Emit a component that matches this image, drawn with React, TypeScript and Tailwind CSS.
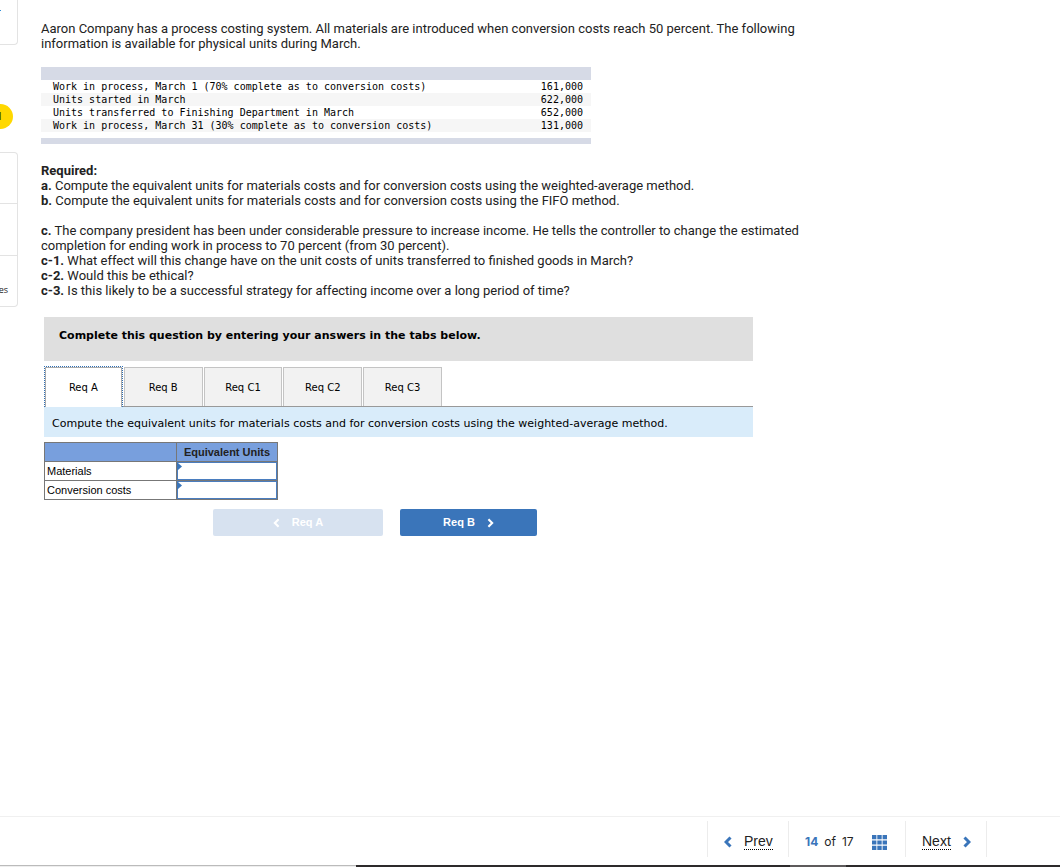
import { useState } from "react";

interface Tab {
  id: string;
  label: string;
}

const tabs: Tab[] = [
  { id: "a", label: "Req A" },
  { id: "b", label: "Req B" },
  { id: "c1", label: "Req C1" },
  { id: "c2", label: "Req C2" },
  { id: "c3", label: "Req C3" },
];

const units = [
  {
    label: "Work in process, March 1 (70% complete as to conversion costs)",
    value: "161,000",
  },
  { label: "Units started in March", value: "622,000" },
  {
    label: "Units transferred to Finishing Department in March",
    value: "652,000",
  },
  {
    label: "Work in process, March 31 (30% complete as to conversion costs)",
    value: "131,000",
  },
];

const answers = ["Materials", "Conversion costs"];

const Chevron = ({ left, className }: { left?: boolean; className: string }) => (
  <svg
    viewBox="0 0 8 12"
    className={className}
    fill="none"
    stroke="currentColor"
    aria-hidden="true"
  >
    <path d={left ? "M6.5 1.5 2 6l4.5 4.5" : "M1.5 1.5 6 6l-4.5 4.5"} />
  </svg>
);

const Rail = () => (
  <aside className="flex w-[18px] shrink-0 flex-col items-start overflow-hidden">
    <div className="flex h-[45px] w-full rounded-br border-r border-b border-[#e3e3e3]">
      <span className="mt-[10px] h-px w-px bg-[#2f8fd8]" />
    </div>
    <div className="mt-[59px] flex h-[25px] w-[13px] items-center justify-start overflow-hidden rounded-r-full bg-[#ffd800] font-['Open_Sans',sans-serif] text-[10px] font-bold text-[#4a3f10]">
      <span className="-ml-[5px]">d</span>
    </div>
    <div className="mt-[23px] w-full rounded-r border-y border-r border-[#e3e3e3]">
      <div className="h-[51px] border-b border-[#e3e3e3]" />
      <div className="h-[52px] border-b border-[#e3e3e3]" />
      <div className="flex h-[50px] items-end justify-end pr-[9px] pb-[10px] font-['Open_Sans',sans-serif] text-[9px] text-[#222]">
        es
      </div>
    </div>
  </aside>
);

const UnitsTable = () => (
  <table className="mt-4 w-[550px] border-collapse font-['DejaVu_Sans_Mono',monospace] text-[10px] leading-[13px] text-black">
    <thead>
      <tr>
        <td colSpan={2} className="h-[13px] bg-[#d6dae6] p-0" />
      </tr>
    </thead>
    <tbody>
      {units.map((row) => (
        <tr key={row.label} className="even:bg-[#f6f6f6]">
          <td className="p-0 pl-3">{row.label}</td>
          <td className="p-0 pr-2 text-right">{row.value}</td>
        </tr>
      ))}
    </tbody>
    <tfoot>
      <tr>
        <td colSpan={2} className="p-0 pt-[6px]">
          <div className="h-[6px] bg-[#d6dae6]" />
        </td>
      </tr>
    </tfoot>
  </table>
);

const AnswerTable = () => (
  <table className="mt-[5px] w-[234px] table-fixed border-collapse border border-[#777] font-['Liberation_Sans',sans-serif] text-[11px] leading-[13px] text-black">
    <thead>
      <tr className="h-[19px] bg-[#789fdd]">
        <td className="w-[132px] border border-[#777]" />
        <th scope="col" className="border border-[#777] p-0 font-bold text-[#222]">
          Equivalent Units
        </th>
      </tr>
    </thead>
    <tbody>
      {answers.map((name) => (
        <tr key={name}>
          <td className="border border-[#777] p-0 pl-[2px]">
            <label htmlFor={name}>{name}</label>
          </td>
          <td className="relative border border-[#777] p-0">
            <input
              id={name}
              type="text"
              className="block h-[18px] w-full border border-[#4a7dbf] px-2 text-right outline-none"
            />
            <svg
              viewBox="0 0 5 7"
              className="absolute top-px left-0 h-[7px] w-[5px] fill-[#3a75ba]"
              aria-hidden="true"
            >
              <path d="M0 0h1l4 3.500L1 7H0z" />
            </svg>
          </td>
        </tr>
      ))}
    </tbody>
  </table>
);

const Footer = () => (
  <footer className="border-t border-[#f0f0f0]">
    <nav className="mt-1 mr-[73px] mb-[8px] flex h-9 justify-end font-['Liberation_Sans',sans-serif] text-sm text-[#222]">
      <div className="flex w-[81px] items-center border-l border-[#ececec] pt-[6px] pl-4">
        <Chevron left className="mr-3 h-3 w-2 stroke-3 text-[#3a75ba]" />
        <a href="#prev" className="border-b border-dotted border-black leading-[15px]">
          Prev
        </a>
      </div>
      <div className="flex w-[117px] items-center border-l border-[#ececec] pt-[6px] pl-4 font-['Inter',sans-serif] text-xs">
        <span className="w-[49px] whitespace-nowrap">
          <b className="text-[#3a75ba]">14</b>
          <span className="mx-[6px]">of</span>
          17
        </span>
        <button type="button" aria-label="Question list" className="ml-[18px]">
          <svg viewBox="0 0 15 15" className="h-[15px] w-[15px] fill-[#3a75ba]">
            <path d="M0 0h4.400v4.200H0zM5.300 0h4.400v4.200h-4.400zM10.600 0h4.400v4.200h-4.400zM0 5.400h4.400v4.200H0zM5.300 5.400h4.400v4.200h-4.400zM10.600 5.400h4.400v4.200h-4.400zM0 10.800h4.400v4.200H0zM5.300 10.800h4.400v4.200h-4.400zM10.600 10.800h4.400v4.200h-4.400z" />
          </svg>
        </button>
      </div>
      <div className="flex w-[82px] items-center border-x border-[#ececec] pt-[6px] pl-4">
        <a href="#next" className="border-b border-dotted border-black leading-[15px]">
          Next
        </a>
        <Chevron className="ml-3 h-3 w-2 stroke-3 text-[#3a75ba]" />
      </div>
    </nav>
    <div className="flex h-[2px]">
      <div className="w-[356px] shrink-0 border-t border-[#bbb] bg-[#eee]" />
      <div className="grow bg-[#2d2a2b]" />
      <div className="w-14 bg-[#5d5a5b]" />
      <div className="w-[214px] bg-[#2d2a2b]" />
    </div>
  </footer>
);

const App = () => {
  const [active, setActive] = useState("a");

  return (
    <div className="flex min-h-screen flex-col bg-white">
      <div className="flex grow">
        <Rail />
        <main className="grow pt-[21px] pl-[23px]">
          <section className="max-w-[900px] font-['Roboto',sans-serif] text-[13px] leading-[15px] text-[#222]">
            <p>
              Aaron Company has a process costing system. All materials are
              introduced when conversion costs reach 50 percent. The following
              <br />
              information is available for physical units during March.
            </p>
            <UnitsTable />
            <p className="mt-[19px] font-bold">Required:</p>
            <p>
              <b>a.</b> Compute the equivalent units for materials costs and for
              conversion costs using the weighted-average method.
            </p>
            <p>
              <b>b.</b> Compute the equivalent units for materials costs and for
              conversion costs using the FIFO method.
            </p>
            <p className="mt-[15px]">
              <b>c.</b> The company president has been under considerable
              pressure to increase income. He tells the controller to change the
              estimated
              <br />
              completion for ending work in process to 70 percent (from 30
              percent).
            </p>
            <p>
              <b>c-1.</b> What effect will this change have on the unit costs of
              units transferred to finished goods in March?
            </p>
            <p>
              <b>c-2.</b> Would this be ethical?
            </p>
            <p>
              <b>c-3.</b> Is this likely to be a successful strategy for
              affecting income over a long period of time?
            </p>
          </section>

          <section className="mt-[19px] ml-[3px] max-w-[709px] font-['DejaVu_Sans',sans-serif] text-[11px] text-black">
            <h2 className="h-11 bg-[#dfdfdf] pt-[11px] pl-[15px] leading-4 font-bold">
              Complete this question by entering your answers in the tabs below.
            </h2>
            <div className="mt-[5px] shadow-[inset_0_-1px_0_#999]">
              <div
                role="tablist"
                className="grid w-[398px] grid-cols-5 items-end gap-px text-[10px]"
              >
                {tabs.map((tab) => (
                  <button
                    key={tab.id}
                    type="button"
                    role="tab"
                    aria-selected={active === tab.id}
                    onClick={() => setActive(tab.id)}
                    className={
                      active === tab.id
                        ? "flex h-[41px] border border-b-0 border-dotted border-[#2f6fb5] bg-white"
                        : "mb-px h-[39px] border border-b-0 border-[#c4c4c4] bg-[#f2f2f2]"
                    }
                  >
                    {active === tab.id ? (
                      <span className="h-10 grow border border-b-0 border-[#aaa] leading-10">
                        {tab.label}
                      </span>
                    ) : (
                      tab.label
                    )}
                  </button>
                ))}
              </div>
            </div>
            <p className="h-[30px] bg-[#d9ecfa] pt-[9px] pl-2 leading-4">
              Compute the equivalent units for materials costs and for
              conversion costs using the weighted-average method.
            </p>
            <AnswerTable />
            <div className="mt-[9px] ml-[169px] flex gap-[17px] font-['Liberation_Sans',sans-serif] font-bold text-white">
              <button
                type="button"
                disabled
                className="flex h-[27px] w-[170px] items-center justify-center gap-3 rounded-[2px] bg-[#d7e2f0]"
              >
                <Chevron left className="h-[10px] w-[7px] stroke-[2.5]" />
                Req A
              </button>
              <button
                type="button"
                className="flex h-[27px] w-[137px] items-center justify-center gap-3 rounded-[2px] bg-[#3a75ba]"
              >
                Req B
                <Chevron className="h-[10px] w-[7px] stroke-[2.5]" />
              </button>
            </div>
          </section>
        </main>
      </div>
      <Footer />
    </div>
  );
};

export default App;
